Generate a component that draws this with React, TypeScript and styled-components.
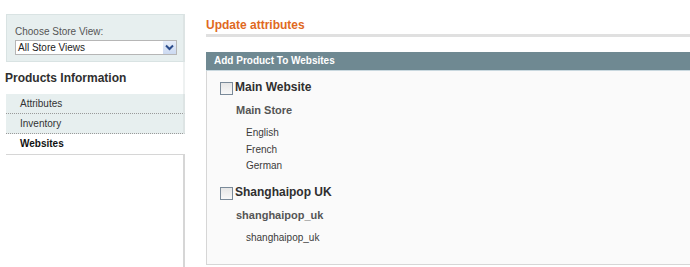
import React from "react";
import styled, { createGlobalStyle } from "styled-components";

const GlobalStyle = createGlobalStyle`
  html, body {
    margin: 0;
    padding: 0;
    background: #ffffff;
    height: 100%;
  }
  body {
    font-family: "Liberation Sans", Arial, sans-serif;
    color: #2f2f2f;
    overflow: hidden;
  }
  #root {
    height: 100%;
  }
`;

const Page = styled.div`
  display: flex;
  height: 267px;
  padding-left: 6px;
`;

const Sidebar = styled.div`
  width: 179px;
  flex-shrink: 0;
  display: flex;
  flex-direction: column;
  padding-top: 14px;
`;

const StoreSwitcher = styled.div`
  background: #e7efef;
  border: 1px solid #d9e3e3;
  border-right: 2px solid #dde4e4;
  height: 48px;
  padding: 10px 6px 0 8px;
  box-sizing: border-box;
`;

const SwitcherLabel = styled.div`
  font-size: 10px;
  color: #555;
  line-height: 13px;
  margin-bottom: 2px;
`;

const Select = styled.div`
  height: 15px;
  box-sizing: border-box;
  border: 1px solid #b6b6b6;
  background: #fff;
  display: flex;
  align-items: center;
  justify-content: space-between;
  font-size: 10px;
  color: #222;
  padding-left: 2px;
  width: 162px;
`;

const SelectArrow = styled.div`
  width: 13px;
  height: 13px;
  background: linear-gradient(#e8eef9, #cbd9f1);
  display: flex;
  align-items: center;
  justify-content: center;
`;

const SideTitle = styled.div`
  font-size: 12px;
  font-weight: bold;
  color: #2f2f2f;
  height: 32px;
  line-height: 33px;
  border-right: 2px solid #eef1f1;
  margin-left: -1px;
`;

const Tab = styled.div<{ $active?: boolean }>`
  height: 19px;
  line-height: 19px;
  padding-left: 14px;
  font-size: 10px;
  background: ${(p) => (p.$active ? "#ffffff" : "#e7efef")};
  font-weight: ${(p) => (p.$active ? "bold" : "normal")};
  color: ${(p) => (p.$active ? "#111" : "#333")};
  border-bottom: ${(p) => (p.$active ? "none" : "1px dotted #9a9a9a")};
  border-right: 2px solid ${(p) => (p.$active ? "#ffffff" : "#dde4e4")};
`;

const SideFill = styled.div`
  flex: 1;
  border-top: 1px solid #d6d6d6;
  border-right: 2px solid #d6d6d6;
  margin-top: 1px;
`;

const Main = styled.div`
  flex: 1;
  margin-left: 21px;
  padding-top: 17px;
  display: flex;
  flex-direction: column;
  min-width: 0;
`;

const PageTitle = styled.h3`
  margin: 0;
  font-size: 12px;
  font-weight: bold;
  color: #e0691e;
  line-height: 16px;
  padding-bottom: 1px;
  border-bottom: 3px solid #e0e0e0;
`;

const SectionHead = styled.div`
  margin-top: 15px;
  background: #6f8992;
  color: #fff;
  font-size: 10px;
  font-weight: bold;
  height: 18px;
  line-height: 18px;
  padding-left: 8px;
  border-bottom: 1px solid #c9d8df;
`;

const Fieldset = styled.div`
  flex: 1;
  background: #fafafa;
  border-left: 1px solid #d6d6d6;
  border-bottom: 1px solid #d6d6d6;
  margin-bottom: 2px;
  padding: 8px 0 0 13px;
`;

const WebsiteRow = styled.label<{ $gap?: number }>`
  display: flex;
  align-items: center;
  font-size: 12px;
  font-weight: bold;
  color: #2f2f2f;
  line-height: 16px;
  margin-top: ${(p) => p.$gap ?? 0}px;
`;

const Checkbox = styled.span`
  width: 11px;
  height: 11px;
  border: 1px solid #7a8a99;
  background: linear-gradient(#e6e6e6, #f8f8f8);
  margin-right: 2px;
  margin-top: 3px;
  flex-shrink: 0;
`;

const StoreName = styled.div`
  font-size: 11px;
  font-weight: bold;
  color: #555;
  line-height: 16px;
  padding-left: 16px;
  margin-top: 7px;
`;

const ViewList = styled.div`
  padding-left: 26px;
  margin-top: 7px;
`;

const ViewItem = styled.div`
  font-size: 10px;
  color: #3a3a3a;
  line-height: 16.5px;
`;

const ChevronDown = () => (
  <svg width="9" height="7" viewBox="0 0 9 7">
    <path d="M1 1.5 L4.5 5 L8 1.5" stroke="#2b4c8c" strokeWidth="2" fill="none" />
  </svg>
);

const websites = [
  { name: "Main Website", store: "Main Store", views: ["English", "French", "German"], gap: 0 },
  { name: "Shanghaipop UK", store: "shanghaipop_uk", views: ["shanghaipop_uk"], gap: 9 },
];

export default function App() {
  return (
    <>
      <GlobalStyle />
      <Page>
        <Sidebar>
          <StoreSwitcher>
            <SwitcherLabel>Choose Store View:</SwitcherLabel>
            <Select>
              All Store Views
              <SelectArrow>
                <ChevronDown />
              </SelectArrow>
            </Select>
          </StoreSwitcher>
          <SideTitle>Products Information</SideTitle>
          <Tab>Attributes</Tab>
          <Tab>Inventory</Tab>
          <Tab $active>Websites</Tab>
          <SideFill />
        </Sidebar>
        <Main>
          <PageTitle>Update attributes</PageTitle>
          <SectionHead>Add Product To Websites</SectionHead>
          <Fieldset>
            {websites.map((w) => (
              <div key={w.name}>
                <WebsiteRow $gap={w.gap}>
                  <Checkbox />
                  {w.name}
                </WebsiteRow>
                <StoreName>{w.store}</StoreName>
                <ViewList>
                  {w.views.map((v) => (
                    <ViewItem key={v}>{v}</ViewItem>
                  ))}
                </ViewList>
              </div>
            ))}
          </Fieldset>
        </Main>
      </Page>
    </>
  );
}
